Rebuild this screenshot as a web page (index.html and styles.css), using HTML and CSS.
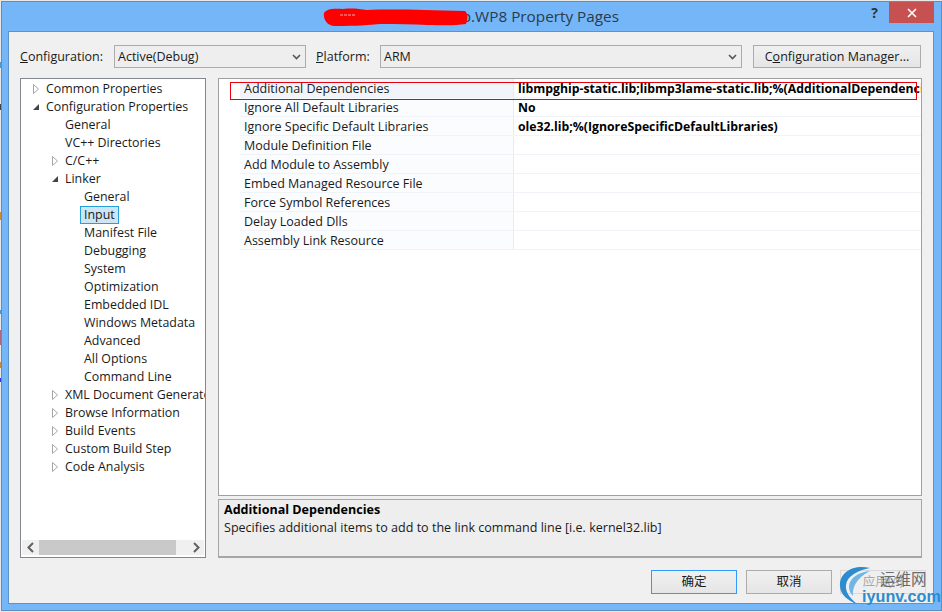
FILE: index.html
```html
<!DOCTYPE html>
<html lang="en">
<head>
<meta charset="utf-8">
<title>Property Pages</title>
<link rel="stylesheet" href="styles.css">
</head>
<body>
<div class="window">
  <div class="titlebar">
    <div class="title"><svg class="scribble" width="145" height="18" viewBox="0 0 145 18"><path d="M1 5C3 1 10 0 20 1C30 0 36 1 44 2C70 1 100 2 142 3C145 5 145 11 143 16C130 18 118 17 104 17C90 16 74 16 58 16C46 17 34 18 12 18C4 18 0 11 1 5Z" fill="#f00"/><path d="M17 7H32" stroke="#e8b0b0" stroke-width="1" stroke-dasharray="3 1"/></svg><span>lib.WP8 Property Pages</span></div>
    <div class="help">?</div>
    <div class="close"><svg width="10" height="10" viewBox="0 0 10 10"><path d="M1 1L9 9M9 1L1 9" stroke="#fff" stroke-width="1.6"/></svg></div>
  </div>
  <div class="client">
    <div class="toolbar">
      <label class="lbl lbl-config"><u>C</u>onfiguration:</label>
      <div class="select select-config"><span>Active(Debug)</span><svg width="9" height="6" viewBox="0 0 9 6"><path d="M1 1L4.5 4.5L8 1" fill="none" stroke="#555" stroke-width="1.6"/></svg></div>
      <label class="lbl lbl-platform"><u>P</u>latform:</label>
      <div class="select select-platform"><span>ARM</span><svg width="9" height="6" viewBox="0 0 9 6"><path d="M1 1L4.5 4.5L8 1" fill="none" stroke="#555" stroke-width="1.6"/></svg></div>
      <div class="btn-manager">C<u>o</u>nfiguration Manager...</div>
    </div>
    <div class="main">
      <div class="tree">
        <div class="tree-rows">
          <div class="row l0"><svg class="arrow" width="8" height="12" viewBox="0 0 8 12"><path d="M1.5 1.5L6.5 6L1.5 10.5Z" fill="#fff" stroke="#a6a6a6"/></svg><span>Common Properties</span></div>
          <div class="row l0"><svg class="arrow" width="8" height="12" viewBox="0 0 8 12"><path d="M7 3V9H1Z" fill="#444"/></svg><span>Configuration Properties</span></div>
          <div class="row l1 leaf"><span>General</span></div>
          <div class="row l1 leaf"><span>VC++ Directories</span></div>
          <div class="row l1"><svg class="arrow" width="8" height="12" viewBox="0 0 8 12"><path d="M1.5 1.5L6.5 6L1.5 10.5Z" fill="#fff" stroke="#a6a6a6"/></svg><span>C/C++</span></div>
          <div class="row l1"><svg class="arrow" width="8" height="12" viewBox="0 0 8 12"><path d="M7 3V9H1Z" fill="#444"/></svg><span>Linker</span></div>
          <div class="row l2 leaf"><span>General</span></div>
          <div class="row l2 leaf"><span class="selected">Input</span></div>
          <div class="row l2 leaf"><span>Manifest File</span></div>
          <div class="row l2 leaf"><span>Debugging</span></div>
          <div class="row l2 leaf"><span>System</span></div>
          <div class="row l2 leaf"><span>Optimization</span></div>
          <div class="row l2 leaf"><span>Embedded IDL</span></div>
          <div class="row l2 leaf"><span>Windows Metadata</span></div>
          <div class="row l2 leaf"><span>Advanced</span></div>
          <div class="row l2 leaf"><span>All Options</span></div>
          <div class="row l2 leaf"><span>Command Line</span></div>
          <div class="row l1"><svg class="arrow" width="8" height="12" viewBox="0 0 8 12"><path d="M1.5 1.5L6.5 6L1.5 10.5Z" fill="#fff" stroke="#a6a6a6"/></svg><span>XML Document Generator</span></div>
          <div class="row l1"><svg class="arrow" width="8" height="12" viewBox="0 0 8 12"><path d="M1.5 1.5L6.5 6L1.5 10.5Z" fill="#fff" stroke="#a6a6a6"/></svg><span>Browse Information</span></div>
          <div class="row l1"><svg class="arrow" width="8" height="12" viewBox="0 0 8 12"><path d="M1.5 1.5L6.5 6L1.5 10.5Z" fill="#fff" stroke="#a6a6a6"/></svg><span>Build Events</span></div>
          <div class="row l1"><svg class="arrow" width="8" height="12" viewBox="0 0 8 12"><path d="M1.5 1.5L6.5 6L1.5 10.5Z" fill="#fff" stroke="#a6a6a6"/></svg><span>Custom Build Step</span></div>
          <div class="row l1"><svg class="arrow" width="8" height="12" viewBox="0 0 8 12"><path d="M1.5 1.5L6.5 6L1.5 10.5Z" fill="#fff" stroke="#a6a6a6"/></svg><span>Code Analysis</span></div>
        </div>
        <div class="hscroll">
          <svg width="17" height="15" viewBox="0 0 17 15"><path d="M11 3L6.5 7.5L11 12" fill="none" stroke="#606060" stroke-width="2"/></svg>
          <div class="thumb"></div>
          <svg class="sr" width="28" height="15" viewBox="0 0 28 15"><path d="M18 3L22.5 7.5L18 12" fill="none" stroke="#606060" stroke-width="2"/></svg>
        </div>
      </div>
      <div class="right">
        <div class="grid">
          <div class="prop first"><div class="name">Additional Dependencies</div><div class="val">libmpghip-static.lib;libmp3lame-static.lib;%(AdditionalDependencies)</div></div>
          <div class="prop"><div class="name">Ignore All Default Libraries</div><div class="val">No</div></div>
          <div class="prop"><div class="name">Ignore Specific Default Libraries</div><div class="val">ole32.lib;%(IgnoreSpecificDefaultLibraries)</div></div>
          <div class="prop"><div class="name">Module Definition File</div><div class="val"></div></div>
          <div class="prop"><div class="name">Add Module to Assembly</div><div class="val"></div></div>
          <div class="prop"><div class="name">Embed Managed Resource File</div><div class="val"></div></div>
          <div class="prop"><div class="name">Force Symbol References</div><div class="val"></div></div>
          <div class="prop"><div class="name">Delay Loaded Dlls</div><div class="val"></div></div>
          <div class="prop"><div class="name">Assembly Link Resource</div><div class="val"></div></div>
          <div class="redbox"></div>
        </div>
        <div class="desc">
          <div class="desc-title">Additional Dependencies</div>
          <div class="desc-text">Specifies additional items to add to the link command line [i.e. kernel32.lib]</div>
        </div>
      </div>
    </div>
    <div class="footer">
      <div class="btn default">确定</div>
      <div class="btn">取消</div>
      <div class="btn disabled">应用(A)</div>
    </div>
  </div>
  <div class="watermark">
    <svg class="swirl" width="40" height="42" viewBox="0 0 40 42"><path d="M32 4C16 0 1 8 2 22C2 30 10 37 19 40C12 34 7 28 8 21C9 12 20 6 32 4Z" fill="#2b8ccf"/><path d="M32 7C22 8 12 13 11 22C11 26 12 29 15 32C14 24 18 14 32 7Z" fill="#6fb5e5"/></svg>
    <div class="wm-cn">运维网</div>
    <div class="wm-en">iyunv.com</div>
  </div>
</div>
</body>
</html>
```

FILE: styles.css
```css
html, body {
  margin: 0;
  padding: 0;
  background: #fff;
}
html {
  background-color: #e8e8e8;
  background-image: linear-gradient(#e8e8e8 62px, #4a9bd4 62px, #4a9bd4 68px, #e8e8e8 68px, #e8e8e8 104px, #444 104px, #444 110px, #e8e8e8 110px, #e8e8e8 212px, #c88a3a 212px, #c88a3a 220px, #e8e8e8 220px, #e8e8e8 310px, #4a9bd4 310px, #4a9bd4 314px, #e8e8e8 314px, #e8e8e8 330px, #b0687a 330px, #b0687a 345px, #e8e8e8 345px, #e8e8e8 362px, #c88a3a 362px, #c88a3a 368px, #e8e8e8 368px, #e8e8e8 378px, #2a3ae0 378px, #2a3ae0 382px, #e8e8e8 382px);
  background-size: 1px 612px;
  background-repeat: no-repeat;
}
body {
  background: transparent;
  width: 942px;
  height: 612px;
  overflow: hidden;
  font-family: "Open Sans", "Noto Sans CJK SC", sans-serif;
  font-size: 12.5px;
  color: #1a1a1a;
}
.window {
  position: relative;
  box-sizing: border-box;
  width: 941px;
  height: 610px;
  margin: 1px 0 0 1px;
  padding: 0 7px 6px 6px;
  background: #74b6f7;
  border: 1px solid #5b8fc2;
  display: flex;
  flex-direction: column;
}
.titlebar {
  height: 29px;
  flex: none;
  display: flex;
  align-items: flex-start;
  position: relative;
}
.title {
  position: absolute;
  left: 315px;
  top: 4px;
  font-size: 15.3px;
  line-height: 20px;
  color: #2c3a4a;
  display: flex;
  align-items: flex-start;
  white-space: nowrap;
}
.scribble {
  flex: none;
  position: relative;
  z-index: 1;
  margin-top: 2px;
  margin-right: -14px;
}
.help {
  margin-left: auto;
  margin-right: 11px;
  font-weight: 700;
  font-size: 14px;
  line-height: 21px;
  color: #333;
}
.close {
  width: 45px;
  height: 21px;
  background: #c75050;
  display: flex;
  align-items: center;
  justify-content: center;
}
.client {
  flex: 1;
  min-height: 0;
  background: #f0f0f0;
  border: 1px solid #5d93c6;
  padding: 13px 11px 0 11px;
  display: flex;
  flex-direction: column;
}
.toolbar {
  display: flex;
  align-items: center;
  height: 23px;
  flex: none;
}
.lbl {
  white-space: nowrap;
}
.lbl-config { width: 94px; }
.lbl-platform { width: 64px; margin-left: 10px; }
.select {
  box-sizing: border-box;
  height: 23px;
  background: #eeeeee;
  border: 1px solid #acacac;
  display: flex;
  align-items: center;
  justify-content: space-between;
  padding: 0 4px 0 3px;
}
.select-config { width: 192px; }
.select-platform { width: 362px; }
.btn-manager {
  box-sizing: border-box;
  margin-left: 11px;
  width: 168px;
  height: 23px;
  line-height: 21px;
  border: 1px solid #acacac;
  background: linear-gradient(#f0f0f0, #e5e5e5);
  text-align: center;
  white-space: nowrap;
}
.main {
  display: flex;
  margin-top: 10px;
  height: 480px;
  flex: none;
}
.tree {
  box-sizing: border-box;
  width: 186px;
  height: 480px;
  background: #fff;
  border: 1px solid #828790;
  display: flex;
  flex-direction: column;
  overflow: hidden;
  font-size: 12.4px;
}
.tree-rows {
  flex: 1;
  min-height: 0;
  overflow: hidden;
}
.row {
  box-sizing: border-box;
  height: 18px;
  padding-top: 2px;
  line-height: 16px;
  display: flex;
  align-items: center;
  white-space: nowrap;
}
.arrow {
  flex: none;
  margin-right: 6px;
}
.l0 { padding-left: 11px; }
.l1 { padding-left: 30px; }
.l2 { padding-left: 48px; }
.l1.leaf { padding-left: 29px; margin-left: 15px; }
.l2.leaf { margin-left: 15px; }
.selected {
  margin-left: -4px;
  padding: 0 3px;
  height: 16px;
  line-height: 16px;
  background: #cde6f7;
  border: 1px solid #26a0da;
}
.hscroll {
  flex: none;
  height: 15px;
  margin: 0 1px 2px 1px;
  display: flex;
  background: #f0f0f0;
}
.thumb {
  width: 137px;
  background: #c9c9c9;
}
.right {
  margin-left: 12px;
  width: 704px;
  display: flex;
  flex-direction: column;
}
.grid {
  position: relative;
  box-sizing: border-box;
  height: 418px;
  background: #fff;
  border: 1px solid #a0a0a0;
  overflow: hidden;
  padding-left: 21px;
}
.prop {
  display: flex;
  height: 19px;
  line-height: 20px;
  box-sizing: border-box;
  border-bottom: 1px solid #f0f3f8;
  white-space: nowrap;
}
.name {
  box-sizing: border-box;
  width: 274px;
  flex: none;
  padding-left: 4px;
  background: #fbfcfe;
  border-right: 1px solid #e8ecf2;
}
.first .name { background: #f1f5fb; }
.val {
  padding-left: 4px;
  font-size: 12.25px;
  font-weight: 700;
  color: #000;
}
.redbox {
  position: absolute;
  left: 11px;
  top: 3px;
  width: 685px;
  height: 16px;
  border: 1px solid #e8000d;
}
.desc {
  box-sizing: border-box;
  margin-top: 3px;
  height: 59px;
  background: #eeeeee;
  border: 2px solid #a6a6a6;
  border-width: 1px 1px 2px 1px;
  padding: 1px 5px;
  line-height: 18px;
  font-size: 12.55px;
}
.desc-title {
  font-weight: 700;
  color: #000;
}
.footer {
  display: flex;
  gap: 9px;
  margin-top: 12px;
  margin-left: 631px;
}
.btn {
  box-sizing: border-box;
  width: 86px;
  height: 24px;
  flex: none;
  border: 1px solid #acacac;
  background: linear-gradient(#f0f0f0, #e5e5e5);
  text-align: center;
  line-height: 22px;
}
.btn.default {
  border-color: #3399ff;
}
.btn.disabled {
  margin-left: -1px;
  color: #a8a8a8;
  border-color: #d9d9d9;
  background: #efefef;
}
.watermark {
  position: absolute;
  left: 836px;
  top: 562px;
  width: 102px;
  height: 44px;
}
.swirl {
  position: absolute;
  left: 0;
  top: 0;
}
.wm-cn {
  position: absolute;
  left: 42px;
  top: 5px;
  font-size: 15.5px;
  line-height: 20px;
  color: #6a6a6a;
  white-space: nowrap;
}
.wm-en {
  position: absolute;
  left: 24px;
  top: 22px;
  font-family: "Liberation Sans", sans-serif;
  font-size: 16.2px;
  line-height: 20px;
  font-weight: 700;
  color: #2b8ccf;
  white-space: nowrap;
}
```
